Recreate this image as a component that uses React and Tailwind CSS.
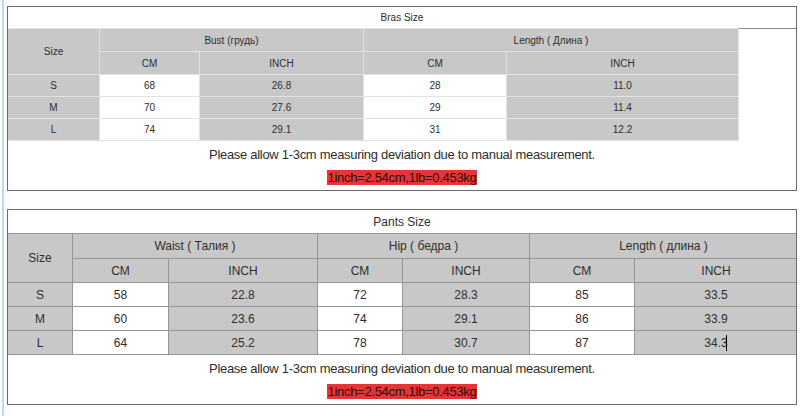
export default function App() {
  const font = { fontFamily: '"Liberation Sans", "DejaVu Sans", sans-serif' };
  const bras = [
    ["S", "68", "26.8", "28", "11.0"],
    ["M", "70", "27.6", "29", "11.4"],
    ["L", "74", "29.1", "31", "12.2"],
  ];
  const pants = [
    ["S", "58", "22.8", "72", "28.3", "85", "33.5"],
    ["M", "60", "23.6", "74", "29.1", "86", "33.9"],
    ["L", "64", "25.2", "78", "30.7", "87", "34.3"],
  ];
  const tc = "border border-[#e2e2e2] text-center align-middle p-0";
  const bc = "border border-[#969696] text-center align-middle p-0";
  return (
    <div className="w-[800px] h-[416px] bg-white flex text-[#2e2e2e]" style={font}>
      <div className="w-[2px] shrink-0" />
      <div className="w-[2px] shrink-0 bg-[#b9dcf2]" />
      <div className="w-[3px] shrink-0" />
      <div className="w-[790px] flex flex-col pt-[6px]">
        {/* Bras box */}
        <div className="h-[185px] border border-[#6a6a6a] flex flex-col overflow-hidden">
          <div className="h-[22px] border-b border-[#8a8a8a] flex items-center justify-center text-[10px] shrink-0">
            Bras Size
          </div>
          <table className="border-collapse table-fixed w-[731px] text-[10px] -ml-px -mt-px">
            <colgroup>
              <col className="w-[92px]" />
              <col className="w-[100px]" />
              <col className="w-[164px]" />
              <col className="w-[143px]" />
              <col className="w-[232px]" />
            </colgroup>
            <tbody>
              <tr className="h-[23px] bg-[#c8c8c8]">
                <td rowSpan={2} className={tc}>Size</td>
                <td colSpan={2} className={tc}>Bust (грудь)</td>
                <td colSpan={2} className={tc}>Length ( Длина )</td>
              </tr>
              <tr className="h-[23px] bg-[#c8c8c8]">
                <td className={tc}>CM</td>
                <td className={tc}>INCH</td>
                <td className={tc}>CM</td>
                <td className={tc}>INCH</td>
              </tr>
              {bras.map((r) => (
                <tr key={r[0]} className="h-[22px]">
                  <td className={tc + " bg-[#c8c8c8]"}>{r[0]}</td>
                  <td className={tc + " bg-white"}>{r[1]}</td>
                  <td className={tc + " bg-[#c8c8c8]"}>{r[2]}</td>
                  <td className={tc + " bg-white"}>{r[3]}</td>
                  <td className={tc + " bg-[#c8c8c8]"}>{r[4]}</td>
                </tr>
              ))}
            </tbody>
          </table>
          <div className="flex flex-col items-center pt-[5px]">
            <div className="text-[13px] tracking-[-0.3px] leading-[18px]">Please allow 1-3cm measuring deviation due to manual measurement.</div>
            <div className="mt-[6px] h-[15px] bg-[#e53535] px-[1px] text-[13px] tracking-[-0.3px] leading-[15px] text-[#2a1010]">1inch=2.54cm,1lb=0.453kg</div>
          </div>
        </div>
        <div className="h-[18px] shrink-0" />
        {/* Pants box */}
        <div className="h-[196px] border border-[#6a6a6a] flex flex-col overflow-hidden">
          <div className="h-[24px] border-b border-[#8a8a8a] flex items-center justify-center text-[12px] shrink-0">
            Pants Size
          </div>
          <table className="border-collapse table-fixed w-[790px] text-[12px] -ml-px -mt-px">
            <colgroup>
              <col className="w-[65px]" />
              <col className="w-[96px]" />
              <col className="w-[149px]" />
              <col className="w-[85px]" />
              <col className="w-[127px]" />
              <col className="w-[105px]" />
              <col className="w-[163px]" />
            </colgroup>
            <tbody>
              <tr className="h-[25px] bg-[#c8c8c8]">
                <td rowSpan={2} className={bc}>Size</td>
                <td colSpan={2} className={bc}>Waist ( Талия )</td>
                <td colSpan={2} className={bc}>Hip ( бедра )</td>
                <td colSpan={2} className={bc}>Length ( длина )</td>
              </tr>
              <tr className="h-[24px] bg-[#c8c8c8]">
                <td className={bc}>CM</td>
                <td className={bc}>INCH</td>
                <td className={bc}>CM</td>
                <td className={bc}>INCH</td>
                <td className={bc}>CM</td>
                <td className={bc}>INCH</td>
              </tr>
              {pants.map((r, i) => (
                <tr key={r[0]} className="h-[24px]">
                  <td className={bc + " bg-[#c8c8c8]"}>{r[0]}</td>
                  <td className={bc + " bg-white"}>{r[1]}</td>
                  <td className={bc + " bg-[#c8c8c8]"}>{r[2]}</td>
                  <td className={bc + " bg-white"}>{r[3]}</td>
                  <td className={bc + " bg-[#c8c8c8]"}>{r[4]}</td>
                  <td className={bc + " bg-white"}>{r[5]}</td>
                  <td className={bc + " bg-[#c8c8c8]"}>
                    <span className="relative">
                      {r[6]}
                      {i === 2 && <span className="absolute right-[1px] top-[-1px] w-px h-[16px] bg-black" />}
                    </span>
                  </td>
                </tr>
              ))}
            </tbody>
          </table>
          <div className="flex flex-col items-center pt-[5px]">
            <div className="text-[13px] tracking-[-0.3px] leading-[18px]">Please allow 1-3cm measuring deviation due to manual measurement.</div>
            <div className="mt-[6px] h-[15px] bg-[#e53535] px-[1px] text-[13px] tracking-[-0.3px] leading-[15px] text-[#2a1010]">1inch=2.54cm,1lb=0.453kg</div>
          </div>
        </div>
      </div>
    </div>
  );
}
